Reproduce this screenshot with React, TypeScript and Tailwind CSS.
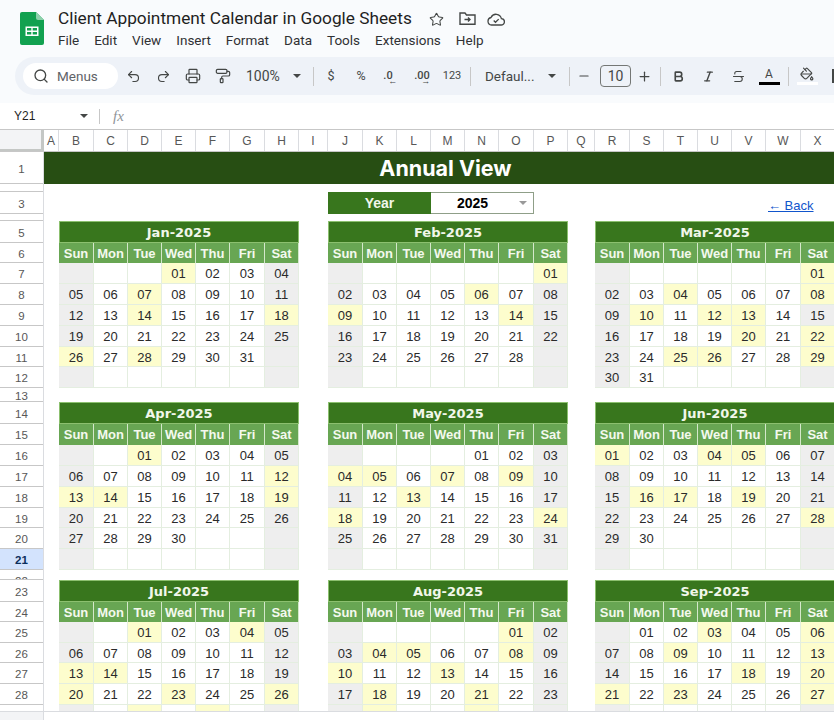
import React from "react";
import { Search, Undo2, Redo2, Printer, PaintRoller, Minus, Plus, Bold, Italic, Strikethrough, PaintBucket, Star } from "lucide-react";

const ROW_LABELS: [number, string][] = [
  [1, "h-[32px]"], [2, "h-[8px]"], [3, "h-[22px]"], [4, "h-[7px]"], [5, "h-[22px]"], [6, "h-[20px]"], [7, "h-[21px]"],
  [8, "h-[21px]"], [9, "h-[21px]"], [10, "h-[21px]"], [11, "h-[20px]"], [12, "h-[21px]"], [13, "h-[14px]"], [14, "h-[22px]"],
  [15, "h-[21px]"], [16, "h-[21px]"], [17, "h-[21px]"], [18, "h-[21px]"], [19, "h-[20px]"], [20, "h-[21px]"], [21, "h-[21px]"],
  [22, "h-[10px]"], [23, "h-[22px]"], [24, "h-[20px]"], [25, "h-[21px]"], [26, "h-[20px]"], [27, "h-[21px]"], [28, "h-[21px]"],
];

const COLS: [string, string][] = [
  ["A", "w-[15px]"], ["B", "w-[35px]"], ["C", "w-[34px]"], ["D", "w-[34px]"], ["E", "w-[34px]"], ["F", "w-[34px]"], ["G", "w-[35px]"], ["H", "w-[34px]"],
  ["I", "w-[29px]"], ["J", "w-[35px]"], ["K", "w-[34px]"], ["L", "w-[34px]"], ["M", "w-[34px]"], ["N", "w-[34px]"], ["O", "w-[35px]"], ["P", "w-[34px]"],
  ["Q", "w-[27px]"], ["R", "w-[35px]"], ["S", "w-[34px]"], ["T", "w-[34px]"], ["U", "w-[34px]"], ["V", "w-[34px]"], ["W", "w-[35px]"], ["X", "w-[34px]"],
];

const DAYS = ["Sun", "Mon", "Tue", "Wed", "Thu", "Fri", "Sat"];

type Month = { name: string; start: number; days: number; hl: number[] };
const MONTHS: Month[] = [
  { name: "Jan-2025", start: 3, days: 31, hl: [1, 7, 14, 18, 26, 28] },
  { name: "Feb-2025", start: 6, days: 28, hl: [1, 6, 9, 14] },
  { name: "Mar-2025", start: 6, days: 31, hl: [1, 4, 8, 10, 12, 13, 20, 22, 25, 26, 29] },
  { name: "Apr-2025", start: 2, days: 30, hl: [1, 12, 13, 14, 19] },
  { name: "May-2025", start: 4, days: 31, hl: [4, 5, 7, 9, 13, 18, 24] },
  { name: "Jun-2025", start: 0, days: 30, hl: [1, 4, 5, 16, 17, 19, 28] },
  { name: "Jul-2025", start: 2, days: 31, hl: [1, 4, 13, 14, 20, 23, 26, 29, 31] },
  { name: "Aug-2025", start: 5, days: 31, hl: [1, 4, 5, 8, 10, 13, 18, 21, 25, 28] },
  { name: "Sep-2025", start: 1, days: 30, hl: [3, 6, 9, 13, 18, 20, 21, 23, 27] },
];

const ROWS_A = "grid-rows-[22px_20px_21px_21px_21px_21px_20px_21px]";
const ROWS_B = "grid-rows-[22px_21px_21px_21px_21px_20px_21px_21px]";
const ROWS_C = "grid-rows-[22px_20px_21px_20px_21px_21px_21px_21px]";

function Calendar({ m, rows, extra }: { m: Month; rows: string; extra?: string }) {
  const cells: (number | null)[] = [];
  for (let i = 0; i < 42; i++) {
    const d = i - m.start + 1;
    cells.push(d >= 1 && d <= m.days ? d : null);
  }
  return (
    <div className={`grid shrink-0 w-[240px] grid-cols-[35px_34px_34px_34px_34px_35px_34px] ${rows} ${extra ?? ""}`}>
      <div className="col-span-7 flex items-center justify-center bg-[#38761d] border border-[#8cc06f] pt-px text-[#f1f7ea] text-[13px] font-bold font-['DejaVu_Sans',sans-serif]">
        {m.name}
      </div>
      {DAYS.map((d) => (
        <div key={d} className="flex items-center justify-center bg-[#68a653] border-r border-[#d5e8cb] pt-px text-[#f4f9ee] text-[13px] font-bold">
          {d}
        </div>
      ))}
      {cells.map((d, i) => {
        const wk = i % 7 === 0 || i % 7 === 6;
        const hl = d !== null && m.hl.includes(d);
        const bg = hl ? "bg-[#fdfdcd]" : wk ? "bg-[#eeeeee]" : "bg-white";
        return (
          <div key={i} className={`flex items-center justify-center border-r border-b border-[#e4eee0] pt-[2px] overflow-hidden text-[13px] text-[#2a2a2a] ${bg}`}>
            {d === null ? "" : String(d).padStart(2, "0")}
          </div>
        );
      })}
    </div>
  );
}

function Caret() {
  return (
    <svg width="8" height="4" viewBox="0 0 8 4" className="shrink-0">
      <path d="M0 0h8L4 4z" fill="#444746" />
    </svg>
  );
}

function Sep({ cls }: { cls: string }) {
  return <div className={`w-px h-[19px] bg-[#c7c7c7] shrink-0 ${cls}`} />;
}

function Box({ children, cls }: { children?: React.ReactNode; cls: string }) {
  return <div className={`flex items-center justify-center shrink-0 ${cls}`}>{children}</div>;
}

function SheetsLogo() {
  return (
    <svg width="24" height="33" viewBox="0 0 24 33" className="shrink-0">
      <path d="M2 0h14l8 8v23a2 2 0 0 1-2 2H2a2 2 0 0 1-2-2V2a2 2 0 0 1 2-2z" fill="#12a150" />
      <path d="M16 0l8 8h-6a2 2 0 0 1-2-2z" fill="#8ed1ac" />
      <path d="M5.5 14.5h13v9.5h-13z M7 16v2.5h4.3V16z M12.7 16v2.5H17V16z M7 20v2.5h4.3V20z M12.7 20v2.5H17V20z" fill="#fff" fillRule="evenodd" />
    </svg>
  );
}

export default function App() {
  const ic = "#444746";
  return (
    <div className="w-[834px] h-[720px] overflow-hidden flex flex-col bg-white font-['Liberation_Sans',Arial,sans-serif]">
      {/* Title and menu */}
      <div className="h-[57px] shrink-0 bg-[#f9fbfd] flex pl-[20px] pt-[12px]">
        <SheetsLogo />
        <div className="ml-[14px] flex flex-col font-['Roboto',sans-serif]">
          <div className="flex items-center h-[22px] -mt-[5px]">
            <span className="text-[17.25px] leading-[22px] text-[#1f1f1f] w-[366px] whitespace-nowrap">Client Appointment Calendar in Google Sheets</span>
            <Star size={15} color={ic} strokeWidth={1.7} className="ml-[5px] mt-[2px]" />
            <svg width="17" height="14" viewBox="0 0 17 14" fill="none" stroke={ic} strokeWidth="1.4" className="ml-[15px] mt-[2px]">
              <path d="M1 3V12.3H16V3H7.5L6 1H1z" />
              <path d="M5.5 7.5H11M9 5.5l2 2-2 2" />
            </svg>
            <svg width="18" height="13" viewBox="0 0 18 13" fill="none" stroke={ic} strokeWidth="1.3" className="ml-[11px] mt-[2px]">
              <path d="M4.5 12H14a3.2 3.2 0 0 0 .4-6.4A5.5 5.5 0 0 0 4 4.5 3.8 3.8 0 0 0 4.5 12z" />
              <path d="M6.7 7.5l1.8 1.8 3.2-3.2" />
            </svg>
          </div>
          <div className="flex gap-[15px] text-[13.5px] leading-[16px] text-[#303134] mt-[3px]">
            {["File", "Edit", "View", "Insert", "Format", "Data", "Tools", "Extensions", "Help"].map((x) => (
              <span key={x}>{x}</span>
            ))}
          </div>
        </div>
      </div>

      {/* Toolbar */}
      <div className="h-[46px] shrink-0 bg-[#f9fbfd] pl-[15px] font-['Roboto',sans-serif] text-[#444746]">
        <div className="h-[38px] w-[830px] rounded-l-[19px] bg-[#eef2f8] flex items-center pl-[8px] overflow-hidden">
          <div className="h-[26px] w-[95px] shrink-0 bg-white rounded-full flex items-center pl-[10px]">
            <Search size={16} color={ic} strokeWidth={2} />
            <span className="ml-[8px] text-[13.5px] text-[#5f6368]">Menus</span>
          </div>
          <Box cls="w-[30px]"><Undo2 size={15} color={ic} strokeWidth={1.8} /></Box>
          <Box cls="w-[30px]"><Redo2 size={15} color={ic} strokeWidth={1.8} /></Box>
          <Box cls="w-[30px]"><Printer size={16} color={ic} strokeWidth={1.8} /></Box>
          <Box cls="w-[29px]"><PaintRoller size={16} color={ic} strokeWidth={1.8} /></Box>
          <span className="ml-[9px] w-[34px] text-[14px] shrink-0">100%</span>
          <Box cls="w-[33px]"><Caret /></Box>
          <Sep cls="" />
          <Box cls="w-[34px] text-[12.5px]">$</Box>
          <Box cls="w-[26px] text-[12.5px]">%</Box>
          <Box cls="w-[28px] text-[11px] font-medium">
            <span className="relative">.0<span className="absolute left-[5px] top-[9px] text-[9px] leading-[9px]">←</span></span>
          </Box>
          <Box cls="w-[40px] text-[11px] font-medium">
            <span className="relative">.00<span className="absolute left-[7px] top-[9px] text-[9px] leading-[9px]">→</span></span>
          </Box>
          <Box cls="w-[20px] text-[11px]">123</Box>
          <Sep cls="ml-[8px]" />
          <span className="ml-[14px] w-[54px] text-[13.5px] shrink-0 whitespace-nowrap">Defaul...</span>
          <Box cls="w-[26px]"><Caret /></Box>
          <Sep cls="ml-[4px]" />
          <Box cls="w-[28px]"><Minus size={14} color={ic} strokeWidth={2} /></Box>
          <Box cls="ml-[2px] w-[31px] h-[22px] border border-[#747775] rounded-[4px] text-[14px]">10</Box>
          <Box cls="w-[26px]"><Plus size={15} color={ic} strokeWidth={2} /></Box>
          <Sep cls="ml-[3px]" />
          <Box cls="w-[34px]"><Bold size={13} color={ic} strokeWidth={3} /></Box>
          <Box cls="w-[26px]"><Italic size={13} color={ic} strokeWidth={2.6} /></Box>
          <Box cls="w-[34px]"><Strikethrough size={15} color={ic} strokeWidth={1.8} /></Box>
          <div className="w-[28px] flex flex-col items-center shrink-0">
            <span className="text-[12px] leading-[13px]">A</span>
            <span className="w-[21px] h-[3px] bg-black mt-[1px]" />
          </div>
          <Sep cls="ml-[5px]" />
          <div className="w-[36px] flex flex-col items-center shrink-0">
            <PaintBucket size={14} color={ic} strokeWidth={2} />
            <span className="w-[21px] h-[3px] bg-white mt-[1px]" />
          </div>
          <span className="ml-[7px] w-[2px] h-[14px] bg-[#444746] shrink-0" />
        </div>
      </div>

      {/* Formula bar */}
      <div className="h-[27px] shrink-0 bg-white border-b border-[#c7c7c7] flex items-center pl-[14px]">
        <span className="w-[66px] text-[12px] text-[#1f1f1f]">Y21</span>
        <Caret />
        <span className="ml-[11px] w-px h-[15px] bg-[#c7c7c7]" />
        <span className="ml-[13px] text-[15px] italic text-[#8f9499] font-['Liberation_Serif',serif]">fx</span>
      </div>

      {/* Column headers */}
      <div className="h-[22px] shrink-0 flex border-b border-[#c7c7c7]">
        <div className="w-[44px] shrink-0 bg-[#f3f4f6] border-r-[3px] border-b-[2px] border-[#c4c7c5]" />
        {COLS.map(([c, w]) => (
          <div key={c} className={`${w} shrink-0 flex items-center justify-center border-r border-[#dadce0] text-[12px] text-[#575757]`}>
            {c}
          </div>
        ))}
      </div>

      {/* Sheet */}
      <div className="h-[559px] shrink-0 flex overflow-hidden">
        <div className="w-[44px] shrink-0 flex flex-col border-r border-[#dadce0]">
          {ROW_LABELS.map(([n, h]) => {
            const small = n === 2 || n === 4 || n === 22;
            const sel = n === 21;
            return (
              <div
                key={n}
                className={`${h} shrink-0 overflow-hidden flex justify-center border-b border-[#c7c7c7] text-[11.5px] leading-[14px] ${small ? "items-start pt-[4px]" : "items-center pt-[2px]"} ${sel ? "bg-[#d3e3fd] font-bold text-[#0b2e5c]" : "text-[#575757]"}`}
              >
                {n}
              </div>
            );
          })}
        </div>
        <div className="flex-1 min-w-0 flex flex-col">
          <div className="h-[32px] shrink-0 flex items-center justify-center bg-[#274e13] text-white text-[21.5px] font-bold font-['Inter',sans-serif] pl-[13px]">
            Annual View
          </div>
          <div className="h-[22px] mt-[8px] shrink-0 flex items-center pl-[284px]">
            <div className="w-[103px] h-full bg-[#38761d] flex items-center justify-center text-[#f1f7ea] text-[14px] font-bold">Year</div>
            <div className="w-[103px] h-full bg-white border border-[#8f9f88] border-l-0 flex items-center pl-[26px] text-[14px] font-bold text-black">
              <span>2025</span>
              <span className="ml-[31px]"><svg width="8" height="4" viewBox="0 0 8 4"><path d="M0 0h8L4 4z" fill="#999999" /></svg></span>
            </div>
            <a className="ml-[234px] mt-[5px] text-[13px] text-[#1155cc] underline whitespace-nowrap">← Back</a>
          </div>
          <div className="flex mt-[7px] pl-[15px] shrink-0">
            <Calendar m={MONTHS[0]} rows={ROWS_A} />
            <Calendar m={MONTHS[1]} rows={ROWS_A} extra="ml-[29px]" />
            <Calendar m={MONTHS[2]} rows={ROWS_A} extra="ml-[27px]" />
          </div>
          <div className="flex mt-[14px] pl-[15px] shrink-0">
            <Calendar m={MONTHS[3]} rows={ROWS_B} />
            <Calendar m={MONTHS[4]} rows={ROWS_B} extra="ml-[29px]" />
            <Calendar m={MONTHS[5]} rows={ROWS_B} extra="ml-[27px]" />
          </div>
          <div className="flex mt-[10px] pl-[15px] shrink-0">
            <Calendar m={MONTHS[6]} rows={ROWS_C} />
            <Calendar m={MONTHS[7]} rows={ROWS_C} extra="ml-[29px]" />
            <Calendar m={MONTHS[8]} rows={ROWS_C} extra="ml-[27px]" />
          </div>
        </div>
      </div>

      {/* Footer */}
      <div className="flex-1 flex border-t border-[#dadce0]">
        <div className="w-[44px] bg-[#f3f4f6] border-r border-[#dadce0]" />
      </div>
    </div>
  );
}
